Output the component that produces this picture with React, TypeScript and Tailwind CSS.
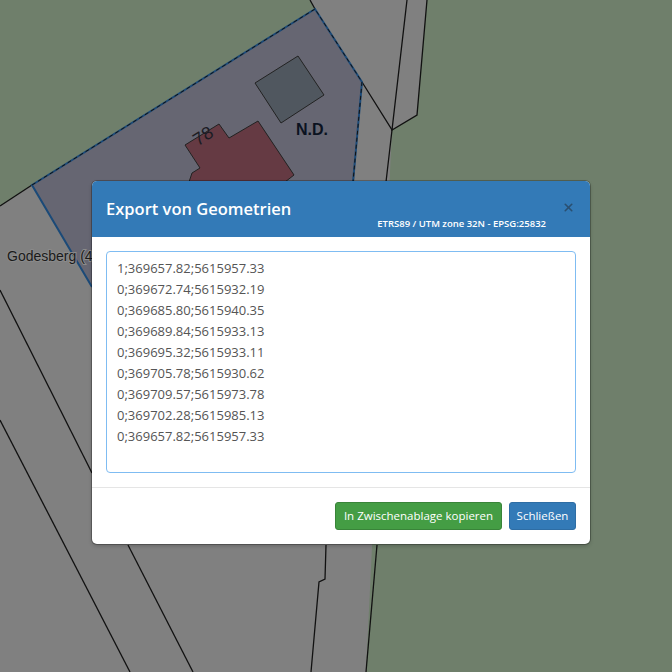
import { X } from "lucide-react";

const lines = [
  "1;369657.82;5615957.33",
  "0;369672.74;5615932.19",
  "0;369685.80;5615940.35",
  "0;369689.84;5615933.13",
  "0;369695.32;5615933.11",
  "0;369705.78;5615930.62",
  "0;369709.57;5615973.78",
  "0;369702.28;5615985.13",
  "0;369657.82;5615957.33",
];

function MapBackground() {
  return (
    <svg className="absolute inset-0" width="672" height="672" viewBox="0 0 672 672">
      <rect width="672" height="672" fill="#6f7f6b" />
      {/* gray road and neighbour parcels */}
      <polygon points="0,206 32,185 315,9 310,0 427,0 417,115 392,130 366,672 0,672" fill="#808080" />
      {/* selected parcel */}
      <polygon points="32,185 315,9 362,82 345,300 100,300" fill="#666672" />
      {/* outlines */}
      <g fill="none" stroke="#111" strokeWidth="1.3">
        <polyline points="0,206 32,185" />
        <polyline points="310,0 315,9" />
        <polyline points="362,82 392,130 386,182" />
        <polyline points="407,0 392,130 417,115 427,0" />
        <polyline points="0,290 92,473" />
        <polyline points="128,545 193,672" />
        <polyline points="0,420 130,672" />
        <polyline points="326,545 325,579 319,582 311,672" />
        <polyline points="377,545 366,672" />
      </g>
      <g fill="none" stroke="#1b4a78" strokeWidth="2">
        <polyline points="92,287 32,185 315,9 362,82 353,182" />
      </g>
      <g fill="none" stroke="#111" strokeWidth="1" strokeDasharray="4 3">
        <polyline points="32,185 315,9 362,82 353,182" />
      </g>
      {/* garage */}
      <polygon points="255,83 298,56 324,95 281,123" fill="#50575f" stroke="#222" strokeWidth="1" />
      {/* house */}
      <polygon
        points="185,145 219,124 229,138 258,121 294,175 285,182 189,182 192,173 200,168"
        fill="#653a43"
        stroke="#222"
        strokeWidth="1"
      />
      <text
        x="203"
        y="142"
        fontFamily="'Liberation Sans', sans-serif"
        fontSize="18"
        fill="#1c1c24"
        textAnchor="middle"
        transform="rotate(-32 203 136)"
      >
        78
      </text>
      <text x="296" y="135" fontFamily="'Liberation Sans', sans-serif" fontSize="16" fontWeight="700" fill="#0b1220">
        N.D.
      </text>
      <text
        x="7"
        y="261"
        fontFamily="'Liberation Sans', sans-serif"
        fontSize="14"
        fill="#1a1a1a"
        stroke="#8a8a8a"
        strokeWidth="2"
        paintOrder="stroke"
      >
        Godesberg (4
      </text>
    </svg>
  );
}

export default function App() {
  return (
    <div className="relative h-[672px] w-[672px] overflow-hidden font-['Open_Sans',sans-serif]">
      <MapBackground />
      <div className="absolute inset-0 pl-[92px] pt-[181px]">
        <div className="w-[498px] overflow-hidden rounded-[5px] bg-white shadow-[0_0_0_1px_rgba(0,0,0,0.25),0_2px_4px_rgba(0,0,0,0.2)]">
          <div className="relative h-[56px] bg-[#337ab7] px-[14px] pt-[15px] text-white">
            <h4 className="text-[16.5px] leading-[26px] font-semibold">Export von Geometrien</h4>
            <span className="absolute top-[36px] right-[44px] text-[9.5px] leading-[14px] font-semibold">
              ETRS89 / UTM zone 32N - EPSG:25832
            </span>
            <button className="absolute top-[20px] right-[15px] text-[#2a4f70]">
              <X className="h-[13px] w-[13px]" strokeWidth={3} />
            </button>
          </div>
          <div className="p-[14px]">
            <div className="h-[222px] rounded-[4px] border border-[#7fbcf2] px-[10px] py-[6px] text-[13px] leading-[21px] text-[#555]">
              {lines.map((line, i) => (
                <div key={i}>{line}</div>
              ))}
            </div>
          </div>
          <div className="flex justify-end gap-[7px] border-t border-[#e5e5e5] p-[14px]">
            <button className="h-[28px] w-[167px] rounded-[3px] border border-[#398439] bg-[#449d44] text-[11.5px] text-white">
              In Zwischenablage kopieren
            </button>
            <button className="h-[28px] w-[67px] rounded-[3px] border border-[#2e6da4] bg-[#337ab7] text-[11.5px] text-white">
              Schließen
            </button>
          </div>
        </div>
      </div>
    </div>
  );
}
